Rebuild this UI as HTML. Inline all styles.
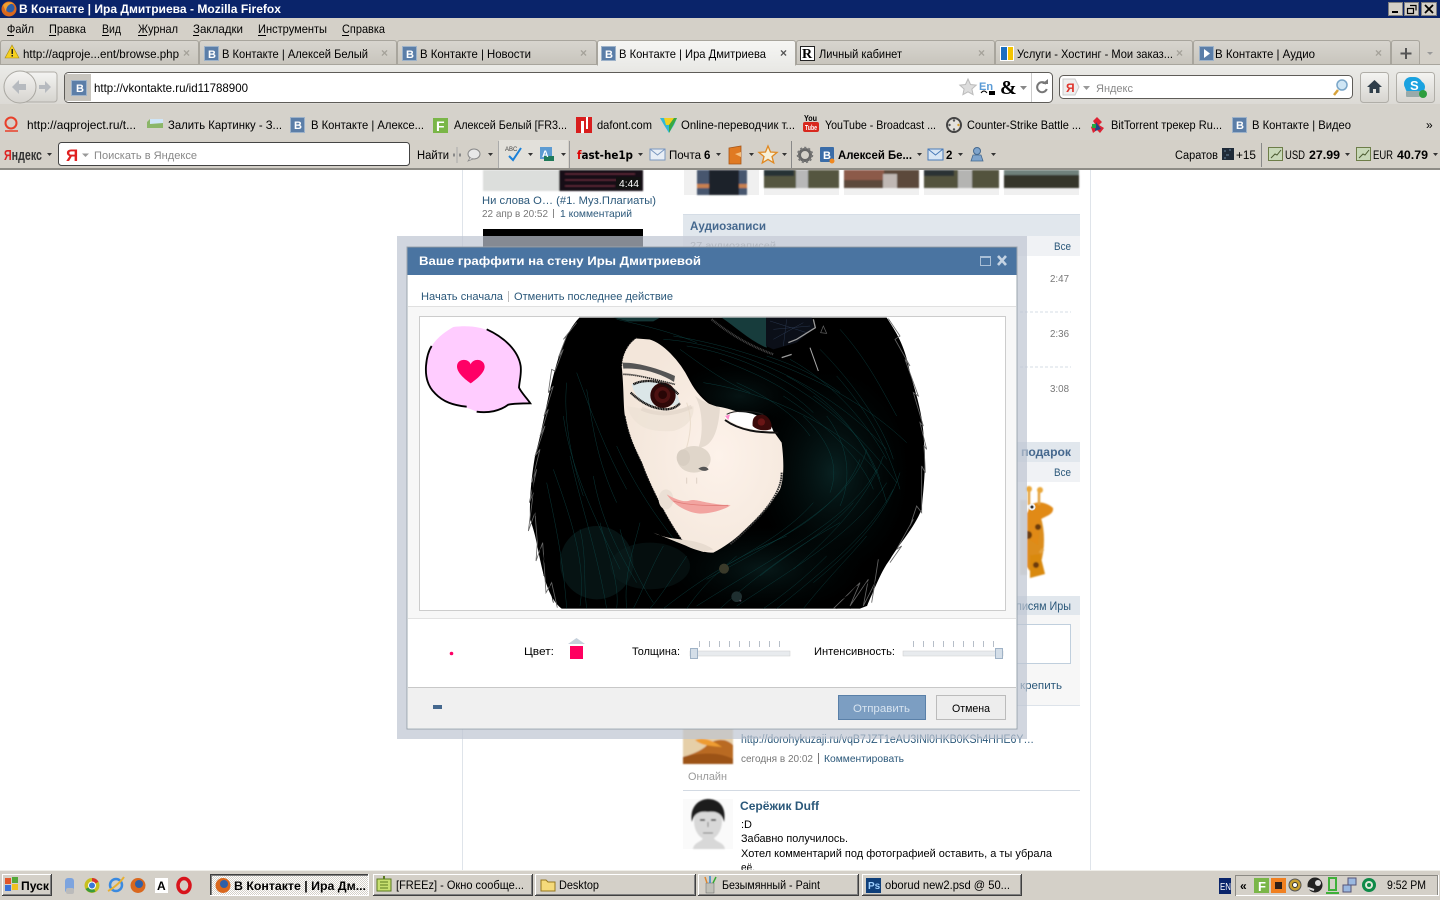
<!DOCTYPE html>
<html><head><meta charset="utf-8"><title>В Контакте | Ира Дмитриева - Mozilla Firefox</title>
<style>
html,body{margin:0;padding:0;background:#fff;width:1440px;height:900px;overflow:hidden}
svg{display:block}
text{font-family:"Liberation Sans","DejaVu Sans",sans-serif;font-size:12px;fill:#000;white-space:pre}
.b{font-weight:bold}
.v{font-size:11px;fill:#2b587a}
.g{font-size:10.5px;fill:#777}
.k{font-size:11px;fill:#000}
.w{fill:#fff}
.vk{font-weight:bold;font-size:11px;fill:#fff}
</style></head><body>
<svg width="1440" height="900" viewBox="0 0 1440 900" xmlns="http://www.w3.org/2000/svg">
<defs>
<linearGradient id="tabg" x1="0" y1="0" x2="0" y2="1"><stop offset="0" stop-color="#d8d5cf"/><stop offset="1" stop-color="#c8c5bd"/></linearGradient>
<linearGradient id="tabA" x1="0" y1="0" x2="0" y2="1"><stop offset="0" stop-color="#f6f6f4"/><stop offset="1" stop-color="#ebebe8"/></linearGradient>
<linearGradient id="nav" x1="0" y1="0" x2="0" y2="1"><stop offset="0" stop-color="#ebebe8"/><stop offset="1" stop-color="#dcdad5"/></linearGradient>
<linearGradient id="btn" x1="0" y1="0" x2="0" y2="1"><stop offset="0" stop-color="#f4f4f2"/><stop offset="1" stop-color="#d6d4cf"/></linearGradient>
<radialGradient id="tealR" cx=".5" cy=".5" r=".5"><stop offset="0" stop-color="#0c2c2c" stop-opacity=".75"/><stop offset="1" stop-color="#001010" stop-opacity="0"/></radialGradient>
<radialGradient id="faceG" cx=".6" cy=".55" r=".6"><stop offset="0" stop-color="#fdf2ea"/><stop offset="1" stop-color="#f3e6da"/></radialGradient>
<pattern id="chk" width="2" height="2" patternUnits="userSpaceOnUse"><rect width="2" height="2" fill="#fff"/><rect width="1" height="1" fill="#d4d0c8"/><rect x="1" y="1" width="1" height="1" fill="#d4d0c8"/></pattern>
<filter id="bl"><feGaussianBlur stdDeviation=".7"/></filter>
</defs>

<!-- page background -->
<rect x="0" y="170" width="1440" height="700" fill="#fff"/>
<rect x="462" y="170" width="1" height="700" fill="#dfe4ea"/>
<rect x="1090" y="170" width="1" height="700" fill="#dfe4ea"/>

<!-- left column -->
<g filter="url(#bl)"><rect x="483" y="170" width="76" height="21" fill="#dcdedc"/>
<rect x="559" y="170" width="84" height="21" fill="#161018"/>
<path d="M565 174h70M565 180h70M565 186h50" stroke="#6a2e40"/></g>
<rect x="616" y="177" width="25" height="12" fill="#111"/>
<text x="619" y="187" class="w" style="font-size:10px" textLength="20">4:44</text>
<text x="482" y="204" class="v" textLength="174">Ни слова О… (#1. Муз.Плагиаты)</text>
<text x="482" y="217" class="g" textLength="66">22 апр в 20:52</text>
<rect x="553" y="209" width="1" height="9" fill="#888"/>
<text x="560" y="217" class="v" style="font-size:10.5px" textLength="72">1 комментарий</text>
<rect x="483" y="229" width="160" height="60" fill="#000"/>

<!-- photo row -->
<rect x="684" y="170" width="75" height="25" fill="#f0f0f0"/>
<g filter="url(#bl)">
<rect x="697" y="170" width="50" height="25" fill="#46566e"/>
<rect x="697" y="184" width="50" height="4" fill="#c88050"/>
<rect x="709" y="170" width="30" height="25" fill="#1d232b"/>
</g>
<rect x="764" y="170" width="75" height="25" fill="#f0f0f0"/><g filter="url(#bl)"><rect x="764" y="170" width="75" height="18" fill="#55573f"/><rect x="796" y="170" width="12" height="18" fill="#b8b8b8"/><rect x="764" y="170" width="30" height="6" fill="#283236"/></g>
<rect x="844" y="170" width="75" height="25" fill="#f0f0f0"/><g filter="url(#bl)"><rect x="844" y="170" width="75" height="18" fill="#5b4a3a"/><rect x="844" y="170" width="40" height="10" fill="#8c5a48"/><rect x="883" y="174" width="14" height="14" fill="#c0b8b4"/></g>
<rect x="924" y="170" width="75" height="25" fill="#f0f0f0"/><g filter="url(#bl)"><rect x="924" y="170" width="75" height="18" fill="#52533c"/><rect x="958" y="170" width="14" height="18" fill="#b4b4b2"/><rect x="924" y="170" width="30" height="6" fill="#2a3034"/></g>
<rect x="1004" y="170" width="75" height="25" fill="#f0f0f0"/><g filter="url(#bl)"><rect x="1004" y="170" width="75" height="18" fill="#35342b"/><rect x="1004" y="170" width="75" height="5" fill="#70817c"/></g>

<!-- right column behind dialog -->
<rect x="683" y="215" width="397" height="21" fill="#e1e7ed"/><rect x="683" y="214" width="397" height="1" fill="#d5dde6"/>
<text x="690" y="230" class="b" style="font-size:11.5px;fill:#45688e" textLength="76">Аудиозаписи</text>
<rect x="683" y="236" width="397" height="20" fill="#f0f2f5"/>
<text x="690" y="249" class="g" style="fill:#999" textLength="86">27 аудиозаписей</text>
<text x="1054" y="250" class="v" textLength="17">Все</text>
<text x="1050" y="282" class="g" textLength="19">2:47</text>
<text x="1050" y="337" class="g" textLength="19">2:36</text>
<text x="1050" y="392" class="g" textLength="19">3:08</text>
<path d="M1020 312H1071M1020 367H1071" stroke="#d6dde6" stroke-dasharray="3 2"/>
<rect x="1000" y="442" width="80" height="20" fill="#e1e7ed"/>
<text x="1021" y="456" class="b" style="font-size:11.5px;fill:#45688e" textLength="50">подарок</text>
<rect x="1000" y="462" width="80" height="20" fill="#f0f2f5"/>
<text x="1054" y="476" class="v" textLength="17">Все</text>
<!-- giraffe -->
<g filter="url(#bl)">
<ellipse cx="1033" cy="540" rx="11" ry="32" fill="#dc8d1a"/>
<path d="M1028 512C1030 500 1044 500 1053 508C1054 515 1045 516 1040 520L1038 545L1030 540Z" fill="#e18a14"/>
<path d="M1029 505V490M1039 505V490" stroke="#e3a23c" stroke-width="2.5"/>
<circle cx="1029" cy="489" r="3" fill="#eaa83a"/><circle cx="1040" cy="490" r="3" fill="#eaa83a"/>
<path d="M1030 555L1040 554L1045 574L1030 578Z" fill="#d9890f"/>
<path d="M1040 553L1043 549" stroke="#e3a23c" stroke-width="3"/>
<circle cx="1036" cy="565" r="3" fill="#6a3a10"/><circle cx="1028" cy="535" r="4" fill="#6a3a10"/><circle cx="1038" cy="527" r="3" fill="#6a3a10"/>
<rect x="1020" y="500" width="7" height="75" fill="#e8e2d8"/>
</g>
<circle cx="1032" cy="507" r="3.5" fill="#eee"/><circle cx="1032" cy="507" r="1.5" fill="#333"/>
<rect x="1000" y="596" width="80" height="19" fill="#e1e7ed"/>
<text x="1016" y="610" class="v" textLength="55" style="font-size:11.5px">писям Иры</text>
<rect x="1000" y="615" width="80" height="90" fill="#f7f7f7"/>
<rect x="1000" y="624.5" width="70.5" height="39" fill="#fff" stroke="#c0cfdd"/>
<text x="1020" y="689" class="v" textLength="42">крепить</text>
<rect x="683" y="705" width="397" height="1" fill="#dde3ea"/>
<g filter="url(#bl)">
<rect x="683" y="725" width="50" height="39" fill="#b96a20"/>
<path d="M683 725h50v20c-8-8-20-6-28 2c-8 6-16 8-22 10z" fill="#e6cfa8"/>
<path d="M695 740C705 736 715 742 722 747C712 746 702 746 695 740Z" fill="#ee9c30"/>
<path d="M683 757c15-4 35-6 50 2v5h-50z" fill="#9c5218"/>
</g>
<text x="741" y="743" class="v" style="font-size:11.5px" textLength="293">http://dorohykuzaji.ru/vqB7JZT1eAU3INl0HKB0KSh4HHE6Y…</text>
<text x="741" y="762" class="g" textLength="72">сегодня в 20:02</text>
<rect x="818" y="753" width="1" height="11" fill="#777"/>
<text x="824" y="762" class="v" style="font-size:10.5px" textLength="80">Комментировать</text>
<text x="688" y="780" style="fill:#999;font-size:11px" textLength="39">Онлайн</text>
<rect x="683" y="790" width="397" height="1" fill="#d3dae3"/>
<!-- avatar -->
<rect x="683" y="799" width="50" height="50" fill="#fafafa"/>
<g filter="url(#bl)">
<path d="M693 849C694 842 702 842 703 838H714C715 842 724 842 725 849Z" fill="#d8d8d8"/>
<ellipse cx="708" cy="821" rx="14" ry="19" fill="#d8d8d8"/>
<path d="M692 822C689 806 700 799 708 799C718 799 727 806 724 822C722 813 716 811 708 812C700 811 694 813 692 822Z" fill="#1c1c1c"/>
<path d="M700 820h5M711 820h5" stroke="#333" stroke-width="1.6"/><path d="M708 822v5M703 833h10" stroke="#777"/>
</g>
<text x="740" y="810" class="b" style="font-size:11.5px;fill:#2b587a" textLength="79">Серёжик Duff</text>
<text x="741" y="828" class="k" textLength="11">:D</text>
<text x="741" y="842" class="k" textLength="107">Забавно получилось.</text>
<text x="741" y="857" class="k" textLength="311">Хотел комментарий под фотографией оставить, а ты убрала</text>
<text x="741" y="871" class="k" textLength="14">её.</text>

<!-- overlay -->
<rect x="397" y="236" width="630" height="503" fill="rgb(189,197,210)" fill-opacity=".7"/>

<!-- dialog -->
<rect x="407" y="247" width="610" height="482" fill="#fff"/>
<rect x="407" y="247" width="610" height="28" fill="#4a74a1"/><rect x="407" y="247" width="610" height="1" fill="#3f6690"/>
<text x="419" y="265" class="w b" style="font-size:12px" textLength="282">Ваше граффити на стену Иры Дмитриевой</text>
<rect x="980.5" y="256.5" width="10" height="9" fill="none" stroke="#a9bfd6"/><rect x="980" y="256" width="11" height="2" fill="#a9bfd6"/>
<path d="M998 256L1006 265M1006 256L998 265" stroke="#c4d3e3" stroke-width="2.6"/>
<text x="421" y="300" class="v" textLength="82">Начать сначала</text>
<rect x="508" y="291" width="1" height="11" fill="#bbb"/>
<text x="514" y="300" class="v" textLength="159">Отменить последнее действие</text>
<rect x="408" y="306" width="608" height="1" fill="#e0e0e0"/>
<rect x="408" y="307" width="608" height="311" fill="#f7f7f7"/>
<rect x="408" y="618" width="608" height="1" fill="#e2e2e2"/>
<rect x="419.5" y="316.5" width="586" height="294" fill="#fff" stroke="#ccc"/>

<!-- drawing: coordinates in 3x crop space -->
<svg x="420" y="317" width="585" height="292" viewBox="0 3 1755 876">
<!-- bubble -->
<path d="M100 33C140 28 190 30 225 55C265 75 295 110 302 150C305 175 298 195 297 215C305 232 320 245 331 262C310 262 285 262 265 266C240 285 205 292 170 287C130 268 100 270 70 255C40 235 20 205 18 170C16 135 25 105 35 90C55 60 80 45 100 33Z" fill="#ffccff"/>
<path d="M200 40C255 65 295 105 302 150C305 175 298 195 297 215C305 232 320 245 331 262C310 262 285 262 265 266C240 285 205 292 170 287M140 272C100 268 70 258 45 232C22 210 16 180 18 150C20 125 25 105 35 90" fill="none" stroke="#000" stroke-width="5.500"/>
<path d="M152 202C135 190 110 170 111 150C112 128 145 125 152 145C160 125 193 128 194 152C194 170 170 190 152 202Z" fill="#ff0066"/>
<!-- hair -->
<path d="M478 5L1400 5C1430 50 1455 90 1470 170C1490 240 1510 300 1512 380C1520 440 1510 520 1505 580C1480 640 1440 680 1410 730C1380 770 1360 830 1340 870L1320 878L425 878C390 850 375 800 360 730C350 680 345 650 330 610C328 540 335 480 345 420C365 350 380 260 395 200C415 120 435 50 478 5Z" fill="#000"/>
<!-- scribbled edges -->
<g fill="none" stroke="#666" stroke-width="2.500">
<path d="M470 20L430 70L440 60L415 125L430 100L405 165L395 160L385 230L400 210L372 300L385 280L360 360L375 330L345 420L360 400L335 500L350 460L328 560L340 530L325 645L345 590L352 680L348 735L368 680L378 830L395 800L412 875"/>
<path d="M1405 8L1440 60L1425 70L1470 150L1455 130L1495 240L1480 230L1510 330L1500 320L1520 400L1512 390L1516 470L1505 450L1505 590L1490 570L1470 630L1480 610L1430 700L1445 690L1410 740"/>
<path d="M1375 730L1355 860L1365 800L1330 870L1345 790L1290 870L1320 800L1240 878"/>
</g>
<g fill="none" stroke="#000" stroke-width="2">
<path d="M1380 760L1340 870M1365 760L1315 850M1340 800L1290 878M1310 810L1250 878M1300 830L1220 875"/>
<path d="M365 700L400 860M352 640L372 780M335 500L345 600M345 430L338 520"/>
</g>
<ellipse cx="1240" cy="470" rx="230" ry="310" fill="url(#tealR)"/>
<ellipse cx="960" cy="240" rx="200" ry="100" fill="url(#tealR)" opacity=".6"/>
<ellipse cx="1030" cy="760" rx="300" ry="130" fill="url(#tealR)" opacity=".75"/>
<ellipse cx="530" cy="740" rx="110" ry="110" fill="#0b2222" opacity=".55"/>
<ellipse cx="690" cy="750" rx="120" ry="70" fill="#0b2020" opacity=".45"/>
<!-- strands -->
<g fill="none" stroke="#0c4444" stroke-width="1.300" opacity=".95">
<path d="M730 70C900 80 1200 180 1400 400"/><path d="M800 90C1000 120 1250 250 1430 500"/><path d="M760 60C950 90 1250 180 1460 380"/>
<path d="M850 200C1050 230 1280 340 1370 470"/><path d="M1100 180C1250 260 1350 380 1400 560"/><path d="M1200 100C1300 200 1390 330 1420 430"/>
<path d="M1370 460C1300 600 1100 700 830 870"/><path d="M1400 500C1310 640 1180 720 950 870"/><path d="M1340 400C1300 560 1060 680 860 790"/>
<path d="M1420 520C1350 650 1240 740 1070 878"/><path d="M1260 620C1150 680 1030 760 900 878"/><path d="M1100 660C1000 700 880 760 730 878"/>
<path d="M1220 300C1280 380 1300 480 1260 570"/><path d="M1150 300C1230 380 1260 450 1230 530"/><path d="M1090 240C1200 310 1320 420 1360 520"/>
<path d="M470 170C510 280 560 410 620 520"/><path d="M430 300C450 450 520 600 600 760"/><path d="M400 460C450 600 500 740 480 870"/><path d="M590 390C630 480 690 580 770 680"/>
<path d="M540 620C560 700 600 800 590 878"/><path d="M660 620C640 700 610 780 620 878"/><path d="M480 640C500 720 490 800 500 878"/><path d="M730 690C690 760 670 820 640 878"/>
<path d="M590 10C680 30 760 50 830 80"/><path d="M1040 120C1100 140 1180 170 1260 230"/><path d="M1260 40C1340 130 1380 210 1430 300"/>
<path d="M1320 430C1280 540 1150 640 1010 700"/><path d="M1390 420C1340 560 1210 680 1120 760"/><path d="M1300 560C1220 650 1120 700 1020 780"/>
<path d="M1180 560C1110 640 1020 690 900 760"/><path d="M1440 470C1400 600 1300 700 1180 800"/><path d="M1340 660C1290 720 1220 790 1150 878"/>
<path d="M1250 180C1330 270 1400 380 1440 520"/><path d="M1180 240C1270 300 1350 400 1380 490"/><path d="M1110 130C1220 190 1330 300 1400 430"/>
<path d="M900 130C1000 170 1100 210 1180 290"/><path d="M950 200C1040 240 1130 300 1170 360"/><path d="M780 100C850 150 900 190 990 230"/>
<path d="M380 500C410 640 430 740 440 878"/><path d="M450 420C480 560 530 700 560 878"/><path d="M520 480C540 600 590 700 650 800"/>
<path d="M500 220C520 340 530 430 590 560"/><path d="M440 200C430 300 450 420 490 540"/><path d="M600 640C620 720 660 800 700 860"/>
<path d="M800 720C760 780 730 830 690 878"/><path d="M950 720C880 780 840 820 800 878"/><path d="M1220 720C1160 780 1100 830 1030 878"/>
</g>
<!-- hat -->
<path d="M580 5H720L700 16H625Z" fill="#143636"/>
<path d="M905 5L1040 5L1040 95C990 75 950 35 905 5Z" fill="#173c3c"/>
<path d="M1038 5L1175 5L1182 35L1130 80L1060 100L1038 90Z" fill="#0b0f18"/>
<path d="M1050 15L1160 50M1060 70L1150 20M1100 10L1090 90M1060 40L1170 30" stroke="#28354c" stroke-width="1.5" fill="none"/>
<path d="M1180 10L1186 35L1130 70L1105 80M1115 115L1085 125" stroke="#999" stroke-width="4" fill="none"/>
<path d="M1170 95L1195 165" stroke="#aaa" stroke-width="3"/>
<path d="M875 10C930 55 990 90 1060 115" stroke="#444" stroke-width="7" stroke-dasharray="3 2" fill="none"/>
<path d="M1202 50L1210 30L1220 52Z" fill="none" stroke="#666" stroke-width="2"/>
<!-- face -->
<path d="M650 65C625 80 605 115 605 150C612 220 610 275 615 300C625 355 640 390 665 440C690 510 750 630 800 690C830 705 860 710 880 710C910 695 945 670 965 650C1010 610 1050 570 1080 520C1095 480 1090 420 1085 380L1060 345C1000 300 930 275 880 270C850 250 825 220 810 190C780 130 730 80 690 68Z" fill="url(#faceG)"/>
<path d="M650 65C625 80 605 115 605 150M615 300C625 355 640 390 665 440C690 510 750 630 800 690" fill="none" stroke="#111" stroke-width="3" stroke-dasharray="6 2"/>
<path d="M650 65L690 68C730 80 780 130 810 190C825 220 850 250 880 270" fill="none" stroke="#000" stroke-width="5"/>
<path d="M620 270C640 330 680 350 760 345C800 335 825 305 820 270C790 280 720 290 620 270Z" fill="#eee2d6" opacity=".8"/>
<path d="M825 240C850 280 850 360 835 395C875 395 895 350 900 275C870 265 845 255 825 240Z" fill="#e6dbd0"/>
<path d="M800 260C815 300 815 340 800 395" stroke="#eadccc" stroke-width="3" fill="none"/>
<ellipse cx="822" cy="430" rx="50" ry="40" fill="#e0d6ca"/><ellipse cx="790" cy="425" rx="20" ry="25" fill="#d8cec2"/>
<path d="M835 458C845 450 860 450 866 460C855 468 845 465 835 458Z" fill="#555"/>
<path d="M800 485v18M830 485v18" stroke="#ddd0c4" stroke-width="3"/>
<ellipse cx="738" cy="550" rx="22" ry="30" fill="#ebe0d5"/>
<path d="M700 650C760 680 820 660 880 700L850 708L800 690Z" fill="#e8dcd0"/>
<!-- lips -->
<path d="M740 535C770 552 795 560 810 553C830 548 860 565 932 568C905 585 870 592 840 593C800 590 760 565 740 535Z" fill="#f2a4a0"/>
<path d="M760 555C800 568 860 570 925 568" stroke="#e07c78" stroke-width="2.500" fill="none"/>
<!-- brow -->
<path d="M608 140C660 140 720 160 765 180L762 198C720 170 660 155 610 158Z" fill="#555"/>
<path d="M610 175C650 175 700 190 765 205" stroke="#222" stroke-width="5" stroke-dasharray="4 2" fill="none"/>
<!-- left eye -->
<path d="M635 205C670 190 730 195 770 230L780 262C750 275 700 275 670 260C650 245 640 225 635 205Z" fill="#dbe6e8"/>
<circle cx="729" cy="238" r="38" fill="#2e0808"/><circle cx="727" cy="237" r="24" fill="#4e1212"/><circle cx="728" cy="236" r="13" fill="#280606"/>
<path d="M640 205C680 185 740 195 775 235M632 230C660 255 690 278 740 280C760 278 770 272 780 262" stroke="#111" stroke-width="7" stroke-dasharray="4 1" fill="none"/>
<path d="M665 278C710 298 760 298 815 272" stroke="#dfd3c8" stroke-width="12" fill="none" opacity=".6"/>
<!-- right eye -->
<path d="M915 300C950 280 1000 285 1050 320L1060 345C1020 345 960 340 915 305Z" fill="#fff"/>
<path d="M915 300L930 295L925 312Z" fill="#ff8ccc"/>
<path d="M998 330C995 300 1010 296 1030 296C1050 302 1060 330 1052 340C1030 346 1010 342 998 330Z" fill="#3c0a0a"/><circle cx="1024" cy="318" r="11" fill="#6a1515"/>
<path d="M915 312C960 345 1020 350 1075 350" stroke="#111" stroke-width="6" fill="none"/>
<path d="M920 295C950 280 1000 285 1030 295" stroke="#222" stroke-width="3" fill="none"/>
<!-- jaw right lines -->
<path d="M1085 470C1085 520 1050 570 1000 620C970 650 950 670 930 685" stroke="#333" stroke-width="6" stroke-dasharray="5 2" fill="none"/>
<!-- buttons -->
<circle cx="912" cy="758" r="15" fill="#3a3a2a"/><circle cx="950" cy="842" r="16" fill="#1f2f30"/><circle cx="961" cy="854" r="3" fill="#556"/>
</svg>

<!-- controls -->
<circle cx="451.5" cy="653.5" r="1.8" fill="#ff0066"/>
<text x="524" y="655" class="k" textLength="30">Цвет:</text>
<path d="M568 644L576.5 638L585 644Z" fill="#c5d0db"/>
<rect x="570" y="646" width="13" height="13" fill="#ff0060"/>
<text x="632" y="655" class="k" textLength="48">Толщина:</text>
<rect x="690" y="651" width="100" height="5" fill="#e8ebee" stroke="#ccc" stroke-width=".5"/>
<path d="M699.500 641v6M709.500 641v6M719.500 641v6M729.500 641v6M739.500 641v6M749.500 641v6M759.500 641v6M769.500 641v6M779.500 641v6" stroke="#b6bec8"/>
<rect x="690.500" y="648.500" width="7" height="10" fill="#d4dee8" stroke="#9fb2c6"/>
<text x="814" y="655" class="k" textLength="81">Интенсивность:</text>
<rect x="903" y="651" width="100" height="5" fill="#e8ebee" stroke="#ccc" stroke-width=".5"/>
<path d="M913.500 641v6M923.500 641v6M933.500 641v6M943.500 641v6M953.500 641v6M963.500 641v6M973.500 641v6M983.500 641v6M993.500 641v6" stroke="#b6bec8"/>
<rect x="995.500" y="648.500" width="7" height="10" fill="#d4dee8" stroke="#9fb2c6"/>
<rect x="408" y="687" width="608" height="1" fill="#c8c8c8"/>
<rect x="408" y="688" width="608" height="40" fill="#f0f0f0"/>
<rect x="433" y="705" width="9" height="4" fill="#45688e"/>
<rect x="838.500" y="695.500" width="87" height="24" fill="#7c9ec2" stroke="#5a80a8"/>
<text x="853" y="712" style="font-size:11px;fill:#d7e3ef" textLength="57">Отправить</text>
<rect x="936.500" y="695.500" width="69" height="24" fill="#ededed" stroke="#bbb"/>
<text x="952" y="712" class="k" textLength="38">Отмена</text>
<rect x="407" y="247" width="610" height="482" fill="none" stroke="#9aa4ae"/>

<!-- ==== chrome ==== -->
<rect x="0" y="0" width="1440" height="18" fill="#0a246a"/>
<circle cx="9" cy="9" r="7.500" fill="#d9681e"/><circle cx="10" cy="8" r="4.500" fill="#2d5fa8"/><path d="M3 5C7 1 12 2 14 4C10 3 6 6 6 12Z" fill="#f0a030"/>
<text x="19" y="13" class="w b" style="font-size:12px" textLength="262">В Контакте | Ира Дмитриева - Mozilla Firefox</text>
<g fill="#d4d0c8" stroke="#808080"><rect x="1388.500" y="2.500" width="14" height="13"/><rect x="1404.500" y="2.500" width="14" height="13"/><rect x="1421.500" y="2.500" width="15" height="13"/></g>
<rect x="1392" y="11" width="6" height="2" fill="#000"/>
<path d="M1410 5.500h6v5M1407.500 8.500h6v5h-6z" fill="none" stroke="#000" stroke-width="1.200"/>
<path d="M1425 5L1433 13M1433 5L1425 13" stroke="#000" stroke-width="1.800"/>

<rect x="0" y="18" width="1440" height="152" fill="#d4d0c8"/>
<text x="7" y="33" textLength="27">Файл</text><rect x="7" y="35" width="7" height="1"/>
<text x="49" y="33" textLength="37">Правка</text><rect x="49" y="35" width="7" height="1"/>
<text x="102" y="33" textLength="19">Вид</text><rect x="102" y="35" width="7" height="1"/>
<text x="138" y="33" textLength="40">Журнал</text><rect x="138" y="35" width="9" height="1"/>
<text x="193" y="33" textLength="50">Закладки</text><rect x="193" y="35" width="6" height="1"/>
<text x="258" y="33" textLength="69">Инструменты</text><rect x="258" y="35" width="8" height="1"/>
<text x="342" y="33" textLength="43">Справка</text><rect x="342" y="35" width="7" height="1"/>

<!-- tabs -->
<g stroke="#a8a59d" fill="url(#tabg)">
<path d="M.5 64V43Q.5 40.500 3 40.500H196Q198.500 40.500 198.500 43V64"/>
<path d="M199.500 64V43Q199.500 40.500 202 40.500H394Q396.500 40.500 396.500 43V64"/>
<path d="M397.500 64V43Q397.500 40.500 400 40.500H594Q596.500 40.500 596.500 43V64"/>
<path d="M796.500 64V43Q796.500 40.500 799 40.500H992Q994.500 40.500 994.500 43V64"/>
<path d="M995.500 64V43Q995.500 40.500 998 40.500H1190Q1192.500 40.500 1192.500 43V64"/>
<path d="M1193.500 64V43Q1193.500 40.500 1196 40.500H1388Q1390.500 40.500 1390.500 43V64"/>
<path d="M1391.500 64V43Q1391.500 40.500 1394 40.500H1417Q1419.500 40.500 1419.500 43V64"/>
</g>
<rect x="0" y="64" width="1440" height="40" fill="url(#nav)"/>
<rect x="0" y="64" width="1440" height="1" fill="#a8a59d"/>
<path d="M597.500 65V43Q597.500 40.500 600 40.500H793Q795.500 40.500 795.500 43V65Z" fill="url(#tabA)" stroke="#a8a59d"/>
<rect x="598" y="63" width="197" height="3" fill="#ebebe8"/>

<path d="M12 45L19 58H5Z" fill="#f5d020" stroke="#a88a10" stroke-width=".6"/><rect x="11.500" y="49" width="1.500" height="5" fill="#222"/><rect x="11.500" y="55" width="1.500" height="1.500" fill="#222"/>
<text x="23" y="58" textLength="156">http://aqproje...ent/browse.php</text>
<text x="183" y="57" style="font-size:12px;fill:#a5a29a" class="b">×</text>

<g fill="#5b7ea8" stroke="#9db2c9"><rect x="204.500" y="46.500" width="14" height="14"/><rect x="402.500" y="46.500" width="14" height="14"/><rect x="601.500" y="46.500" width="14" height="14"/><rect x="1199.500" y="46.500" width="14" height="14"/></g>
<text x="208" y="58" class="vk">В</text><text x="406" y="58" class="vk">В</text><text x="605" y="58" class="vk">В</text>
<path d="M1204 49L1210 53.500L1204 58Z" fill="#fff"/>
<text x="222" y="58" textLength="146">В Контакте | Алексей Белый</text>
<text x="381" y="57" style="fill:#a5a29a" class="b">×</text>
<text x="420" y="58" textLength="111">В Контакте | Новости</text>
<text x="580" y="57" style="fill:#a5a29a" class="b">×</text>
<text x="619" y="58" textLength="147">В Контакте | Ира Дмитриева</text>
<text x="780" y="57" style="fill:#555" class="b">×</text>
<rect x="800.500" y="46.500" width="14" height="14" fill="#fff" stroke="#222"/><text x="802" y="58" style="font-family:'Liberation Serif',serif;font-size:14px;font-weight:bold">R</text>
<text x="819" y="58" textLength="83">Личный кабинет</text>
<text x="978" y="57" style="fill:#a5a29a" class="b">×</text>
<rect x="1000" y="46" width="14" height="15" fill="#fff"/><rect x="1001" y="47" width="6" height="13" fill="#1b6fc0"/><rect x="1008" y="47" width="5" height="13" fill="#f4c400"/>
<text x="1017" y="58" textLength="156">Услуги - Хостинг - Мои заказ...</text>
<text x="1176" y="57" style="fill:#a5a29a" class="b">×</text>
<text x="1215" y="58" textLength="100">В Контакте | Аудио</text>
<text x="1375" y="57" style="fill:#a5a29a" class="b">×</text>
<path d="M1406 48v11M1400.500 53.500h11" stroke="#555" stroke-width="2"/>
<path d="M1427 52h6l-3 3z" fill="#999"/>

<!-- nav -->
<rect x="20" y="72" width="37" height="30" rx="3" fill="url(#btn)" stroke="#b0aea8"/>
<circle cx="20" cy="87" r="16" fill="url(#btn)" stroke="#a9a7a1"/>
<path d="M12 87l7-7v4h7v6h-7v4z" fill="#b6babf"/>
<path d="M51 87l-6-6v4h-6v4h6v4z" fill="#b6babf"/>
<rect x="64.500" y="72.500" width="988" height="30" rx="4" fill="#fff" stroke="#5e5c58"/>
<path d="M66 74h25v27H66Q65 101 65 100V75Q65 74 66 74Z" fill="#c8c5be"/>
<rect x="71.500" y="80.500" width="15" height="15" fill="#5b7ea8" stroke="#9db2c9"/><text x="76" y="92" class="vk">В</text>
<text x="94" y="92" textLength="154">http://vkontakte.ru/id11788900</text>
<path d="M968 79l2.500 5.500 5.700.6-4.300 3.900 1.200 5.700-5.100-2.900-5.100 2.900 1.200-5.700-4.300-3.900 5.700-.6z" fill="#ddd" stroke="#bbb"/>
<text x="979" y="90" style="font-size:11px;fill:#5a9bd6;font-weight:bold">En</text><path d="M981 93q3-4 6 0" stroke="#000" fill="none"/><rect x="989" y="91" width="6" height="4" fill="#000"/>
<text x="1000" y="94" style="font-family:'Liberation Serif',serif;font-size:20px;font-weight:bold">&amp;</text>
<path d="M1020 86h7l-3.500 4z" fill="#888"/>
<rect x="1031" y="73" width="1" height="29" fill="#ccc"/>
<path d="M1046 84a5 5 0 1 0 .8 5" fill="none" stroke="#777" stroke-width="2"/><path d="M1042 84h6v-5z" fill="#777"/>
<rect x="1059.500" y="75.500" width="293" height="23" rx="4" fill="#fff" stroke="#5e5c58"/>
<path d="M1063 79h12l4 8-4 8h-12z" fill="#eee" stroke="#ccc"/><text x="1066" y="92" style="font-size:12px;fill:#e0352c;font-weight:bold">Я</text>
<path d="M1083 86h7l-3.500 4z" fill="#999"/>
<text x="1096" y="92" style="fill:#888;font-size:11px" textLength="37">Яндекс</text>
<circle cx="1342" cy="85" r="5" fill="#cfe6f5" stroke="#7aa6c8" stroke-width="1.500"/><path d="M1338 90l-4 5" stroke="#d6a23a" stroke-width="2.500"/>
<rect x="1360.500" y="72.500" width="28" height="30" rx="3" fill="url(#btn)" stroke="#b0aea8"/>
<path d="M1367 87l7.500-7 7.500 7h-2.500v6h-3.500v-4h-3v4h-3.500v-6z" fill="#2f3e4a"/>
<rect x="1396.500" y="72.500" width="38" height="30" rx="3" fill="url(#btn)" stroke="#b0aea8"/>
<circle cx="1411" cy="84" r="7" fill="#1aa2e0"/><circle cx="1419" cy="87" r="6" fill="#1aa2e0"/><circle cx="1414" cy="86" r="9" fill="#1aa2e0"/><text x="1410" y="90" class="w b" style="font-size:13px">S</text>
<rect x="1406" y="91" width="14" height="6" fill="#9aa" rx="1"/><circle cx="1423" cy="94" r="4" fill="#2e9e3e"/>

<!-- bookmarks -->
<rect x="0" y="104" width="1440" height="36" fill="#d5d2cb"/>
<circle cx="11" cy="123" r="5.500" fill="none" stroke="#e8402a" stroke-width="2"/><path d="M5 131h13" stroke="#e8402a" stroke-width="1.500"/>
<text x="27" y="129" textLength="109">http://aqproject.ru/t...</text>
<path d="M147 122l3-3h13v9h-16z" fill="#8bb668"/><path d="M150 119h13v4l-13 1z" fill="#cfe6f8"/>
<text x="168" y="129" textLength="114">Залить Картинку - З...</text>
<rect x="290.500" y="117.500" width="14" height="15" fill="#5b7ea8" stroke="#9db2c9"/><text x="294" y="129" class="vk">В</text>
<text x="311" y="129" textLength="113">В Контакте | Алексе...</text>
<rect x="433" y="118" width="15" height="15" fill="#7ab648"/><text x="436" y="131" class="w b" style="font-size:14px">F</text>
<text x="454" y="129" textLength="113">Алексей Белый [FR3...</text>
<rect x="576" y="117" width="16" height="16" fill="#d81e1e"/><rect x="581" y="121" width="3" height="12" fill="#fff"/><rect x="586" y="117" width="2" height="12" fill="#fff"/>
<text x="597" y="129" textLength="55">dafont.com</text>
<path d="M660 118h17l-3 7-5 8-5-8z" fill="#2fb8d8"/><path d="M664 118h10l-2 7h-6z" fill="#f0d020"/><path d="M669 125l5-7 3 0-8 15z" fill="#3aa840"/>
<text x="681" y="129" textLength="114">Online-переводчик т...</text>
<text x="804" y="121" class="b" style="font-size:8px" textLength="13">You</text>
<rect x="803" y="122" width="16" height="10" rx="2" fill="#d8281e"/><text x="805" y="130" class="w b" style="font-size:7.500px" textLength="12">Tube</text>
<text x="825" y="129" textLength="111">YouTube - Broadcast ...</text>
<circle cx="954" cy="125" r="7" fill="#e4e2dc" stroke="#444" stroke-width="2"/><circle cx="954" cy="120.500" r="1.200" fill="#555"/><circle cx="954" cy="129.500" r="1.200" fill="#555"/><circle cx="949.500" cy="125" r="1.200" fill="#555"/><circle cx="958.500" cy="125" r="1.200" fill="#d8a030"/>
<text x="967" y="129" textLength="114">Counter-Strike Battle ...</text>
<path d="M1097 117l5 5-3 3 5 3-4 5-3-3-4 3-2-6 4-3-2-3z" fill="#d23"/><path d="M1096 122l5 7-6 2z" fill="#248"/><rect x="1092" y="124" width="4" height="4" fill="#2a4"/>
<text x="1111" y="129" textLength="111">BitTorrent трекер Ru...</text>
<rect x="1232.500" y="117.500" width="14" height="15" fill="#5b7ea8" stroke="#9db2c9"/><text x="1236" y="129" class="vk">В</text>
<text x="1252" y="129" textLength="99">В Контакте | Видео</text>
<text x="1426" y="129" style="font-size:12px">»</text>

<!-- yandex bar -->
<rect x="0" y="168" width="1440" height="2" fill="#8e8c86"/>
<text x="4" y="160" class="b" style="font-size:15px;fill:#333" textLength="38"><tspan style="fill:#d22">Я</tspan>ндекс</text>
<path d="M47 153h5l-2.500 3z" fill="#333"/>
<rect x="58.500" y="142.500" width="351" height="23" rx="3" fill="#fff" stroke="#444"/>
<text x="66" y="161" class="b" style="font-size:17px;fill:#e02020">Я</text>
<path d="M82 153.500h7l-3.500 3.500z" fill="#999"/>
<text x="94" y="159" style="fill:#888;font-size:11px" textLength="103">Поискать в Яндексе</text>
<text x="417" y="159" style="font-size:11.500px" textLength="32">Найти</text>
<path d="M457 147v16" stroke="#aaa"/>
<path d="M455 155l-2 0M459 155l2 0" stroke="#888" stroke-width="3"/>
<ellipse cx="474" cy="154" rx="6" ry="5" fill="#e8e8e8" stroke="#888"/><path d="M470 158l-2 3 5-2" fill="#e8e8e8" stroke="#888" stroke-width=".7"/>
<path d="M488 153h5l-2.500 3z" fill="#333"/>
<rect x="498" y="141" width="1" height="27" fill="#aaa"/>
<rect x="499" y="140" width="69" height="28" fill="#e2e0da"/>
<text x="505" y="151" style="font-size:6px;fill:#444">ABC</text>
<path d="M509 156l4 4 8-12" fill="none" stroke="#1a80d8" stroke-width="2"/>
<path d="M528 153h5l-2.500 3z" fill="#333"/>
<rect x="540" y="147" width="12" height="12" fill="#5c9bd2"/><rect x="544" y="156" width="10" height="5" fill="#1f7a5a"/><text x="542" y="157" class="w b" style="font-size:9px">A</text>
<path d="M561 153h5l-2.500 3z" fill="#333"/>
<rect x="569" y="141" width="1" height="27" fill="#999"/>
<text x="577" y="159" class="b" style="font-size:11.500px;font-family:'DejaVu Sans',sans-serif" textLength="56"><tspan style="fill:#d00">f</tspan>ast-he1p</text>
<path d="M638 153h5l-2.500 3z" fill="#333"/>
<rect x="650" y="149" width="15" height="11" fill="#e8eef6" stroke="#7a97bf"/><path d="M650 149l7.500 6 7.500-6" fill="none" stroke="#7a97bf"/>
<text x="669" y="159" style="font-size:11.500px" textLength="32">Почта</text><text x="704" y="159" class="b" style="font-size:11.500px">6</text>
<path d="M716 153h5l-2.500 3z" fill="#333"/>
<path d="M729 148l12-2v18h-12z" fill="#e07a22" stroke="#a5561a" stroke-width=".8"/><path d="M735 154l6-2v5z" fill="#f6c080"/>
<path d="M749 153h5l-2.500 3z" fill="#333"/>
<path d="M768 146l2.500 6 6.500.4-5 4.200 1.700 6.300-5.700-3.500-5.700 3.500 1.700-6.300-5-4.200 6.500-.4z" fill="#f6f0d8" stroke="#e08820" stroke-width="1.300"/>
<path d="M782 153h5l-2.500 3z" fill="#333"/>
<rect x="791" y="141" width="1" height="27" fill="#888"/>
<circle cx="805" cy="155" r="5.500" fill="none" stroke="#666" stroke-width="3"/><circle cx="805" cy="155" r="7" fill="none" stroke="#777" stroke-width="2.500" stroke-dasharray="2 2"/>
<rect x="820" y="147" width="14" height="15" fill="#3a6ca8" rx="1"/><text x="823" y="159" class="vk">В</text><circle cx="832" cy="161" r="2.500" fill="#f08820"/>
<text x="838" y="159" class="b" style="font-size:11.500px" textLength="74">Алексей Бе...</text>
<path d="M917 153h5l-2.500 3z" fill="#333"/>
<rect x="928" y="149" width="15" height="11" fill="#d8e6f4" stroke="#4a7bb8"/><path d="M928 149l7.500 6 7.500-6" fill="none" stroke="#4a7bb8"/>
<text x="946" y="159" class="b" style="font-size:11.500px">2</text>
<path d="M958 153h5l-2.500 3z" fill="#333"/>
<circle cx="977" cy="151" r="3.500" fill="#7fa4cc" stroke="#44688f"/><path d="M971 161l2-6h8l2 6z" fill="#7fa4cc" stroke="#44688f" stroke-width=".8"/>
<path d="M991 153h5l-2.500 3z" fill="#333"/>
<text x="1175" y="159" style="font-size:11.500px" textLength="43">Саратов</text>
<rect x="1222" y="148" width="12" height="12" fill="#1e2a38"/><path d="M1224 151h2M1229 150h2M1226 155h3M1224 158h2" stroke="#68849c"/>
<text x="1236" y="159" style="font-size:11.500px" textLength="20">+15</text>
<rect x="1261" y="143" width="1" height="24" fill="#888"/>
<rect x="1268.500" y="147.500" width="14" height="13" fill="#c8d8b8" stroke="#6d7d48"/><path d="M1271 158l4-4 2 1 4-5" stroke="#4a5a30" fill="none"/>
<text x="1285" y="159" style="font-size:11.500px" textLength="20">USD</text><text x="1309" y="159" class="b" style="font-size:11.500px" textLength="31">27.99</text>
<path d="M1345 153h5l-2.500 3z" fill="#333"/>
<rect x="1356.500" y="147.500" width="14" height="13" fill="#c8d8b8" stroke="#6d7d48"/><path d="M1359 158l4-4 2 1 4-5" stroke="#4a5a30" fill="none"/>
<text x="1373" y="159" style="font-size:11.500px" textLength="20">EUR</text><text x="1397" y="159" class="b" style="font-size:11.500px" textLength="31">40.79</text>
<path d="M1433 153h5l-2.500 3z" fill="#333"/>

<!-- taskbar -->
<rect x="0" y="870" width="1440" height="30" fill="#d4d0c8"/><rect x="0" y="870" width="1440" height="1" fill="#efeee9"/>
<rect x="2" y="874" width="50" height="22" fill="#404040"/><rect x="2" y="874" width="49" height="21" fill="#fff"/><rect x="3" y="875" width="48" height="20" fill="#808080"/><rect x="3" y="875" width="47" height="19" fill="#d4d0c8"/>
<rect x="5" y="878" width="6" height="6" fill="#e2562a"/><rect x="12" y="877" width="6" height="6" fill="#54a83a"/><rect x="5" y="885" width="6" height="6" fill="#3a72d8"/><rect x="12" y="884" width="6" height="6" fill="#f0c020"/>
<text x="21" y="890" class="b" style="font-size:12px" textLength="28">Пуск</text>
<rect x="65" y="878" width="9" height="15" rx="3" fill="#7da4de"/><rect x="66" y="888" width="8" height="6" rx="2" fill="#bbb"/>
<circle cx="92" cy="885.500" r="7.500" fill="#c8c020"/><path d="M92 878a7.500 7.500 0 0 1 6.500 3.700L92 885.500z" fill="#d8352a"/><path d="M85.500 889a7.500 7.500 0 0 0 10 2.500L92 885.500z" fill="#3a9a3a"/><circle cx="92" cy="885.500" r="3.500" fill="#3a78d8" stroke="#fff"/>
<ellipse cx="116" cy="885" rx="6" ry="6" fill="none" stroke="#3a8ae0" stroke-width="2.500"/><path d="M108 891c4-2 12-8 16-14" stroke="#e8b030" stroke-width="2" fill="none"/>
<circle cx="138" cy="885.500" r="7.500" fill="#d9681e"/><circle cx="139" cy="884" r="4" fill="#2d5fa8"/>
<rect x="155" y="878" width="13" height="15" fill="#fff"/><text x="157" y="890" class="b" style="font-size:12px">A</text>
<ellipse cx="184" cy="885.500" rx="6" ry="7" fill="none" stroke="#d8141c" stroke-width="3.500"/>

<rect x="210" y="874" width="159" height="22" fill="#fff"/><rect x="210" y="874" width="158" height="21" fill="#404040"/><rect x="211" y="875" width="157" height="20" fill="#808080"/><rect x="212" y="876" width="156" height="19" fill="url(#chk)"/>
<circle cx="223" cy="885.500" r="7.500" fill="#d9681e"/><circle cx="224" cy="884" r="4" fill="#2d5fa8"/>
<text x="234" y="890" class="b" style="font-size:12px" textLength="132">В Контакте | Ира Дм...</text>

<g>
<rect x="373" y="874" width="160" height="22" fill="#404040"/><rect x="373" y="874" width="159" height="21" fill="#fff"/><rect x="374" y="875" width="158" height="20" fill="#808080"/><rect x="374" y="875" width="157" height="19" fill="#d4d0c8"/>
<rect x="377" y="879" width="14" height="12" fill="#c8e070" stroke="#5a7a20"/><path d="M380 882h8M380 885h8M380 888h8" stroke="#5a7a20"/><rect x="383" y="876" width="2" height="3" fill="#5a7a20"/>
<text x="396" y="889" textLength="128">[FREEz] - Окно сообще...</text>
</g>
<g>
<rect x="535" y="874" width="161" height="22" fill="#404040"/><rect x="535" y="874" width="160" height="21" fill="#fff"/><rect x="536" y="875" width="159" height="20" fill="#808080"/><rect x="536" y="875" width="158" height="19" fill="#d4d0c8"/>
<path d="M541 880h5l2 2h7v9h-14z" fill="#f5da7a" stroke="#96781f"/>
<text x="559" y="889" textLength="40">Desktop</text>
</g>
<g>
<rect x="698" y="874" width="161" height="22" fill="#404040"/><rect x="698" y="874" width="160" height="21" fill="#fff"/><rect x="699" y="875" width="159" height="20" fill="#808080"/><rect x="699" y="875" width="158" height="19" fill="#d4d0c8"/>
<rect x="706" y="883" width="8" height="10" fill="#c0c0b8" stroke="#666" stroke-width=".5"/><path d="M707 883l-2-6" stroke="#d83" stroke-width="1.500"/><path d="M710 883l0-7" stroke="#38c" stroke-width="1.500"/><path d="M713 883l3-6" stroke="#3a3" stroke-width="1.500"/>
<text x="722" y="889" textLength="98">Безымянный - Paint</text>
</g>
<g>
<rect x="862" y="874" width="160" height="22" fill="#404040"/><rect x="862" y="874" width="159" height="21" fill="#fff"/><rect x="863" y="875" width="158" height="20" fill="#808080"/><rect x="863" y="875" width="157" height="19" fill="#d4d0c8"/>
<rect x="866" y="878" width="15" height="15" fill="#0f3f7a"/><text x="868" y="889" style="font-size:10px;fill:#9fd0ff" class="b">Ps</text>
<text x="885" y="889" textLength="125">oborud new2.psd @ 50...</text>
</g>
<rect x="1219" y="878" width="12" height="16" fill="#0a246a"/><text x="1220" y="890" class="w" style="font-size:10px" textLength="11">EN</text>
<rect x="1235.500" y="875.500" width="202" height="20" fill="#d4d0c8" stroke="#8c8a84"/><rect x="1236" y="895" width="203" height="1" fill="#fff"/><rect x="1438" y="875" width="1" height="21" fill="#fff"/>
<text x="1240" y="890" class="b" style="font-size:12px">«</text>
<rect x="1254" y="878" width="15" height="15" fill="#7ab648"/><text x="1258" y="891" class="w b" style="font-size:13px">F</text>
<rect x="1271" y="878" width="15" height="15" fill="#f08020"/><rect x="1275" y="882" width="7" height="7" fill="#302018"/>
<circle cx="1295" cy="885" r="6" fill="#c8a030" stroke="#555"/><circle cx="1295" cy="885" r="2.500" fill="#fff" stroke="#333"/>
<circle cx="1315" cy="885" r="7.500" fill="#222"/><circle cx="1318" cy="883" r="3" fill="#ddd"/><path d="M1308 888l6 2" stroke="#ddd" stroke-width="2"/>
<rect x="1329" y="878" width="7" height="12" fill="none" stroke="#3fb03a" stroke-width="2"/><path d="M1326 893h13" stroke="#3fb03a" stroke-width="2"/>
<rect x="1348" y="878" width="8" height="7" fill="#9ab8e0" stroke="#557"/><rect x="1343" y="885" width="8" height="7" fill="#9ab8e0" stroke="#557"/>
<circle cx="1369" cy="885" r="7" fill="#0e8a48"/><circle cx="1369" cy="885" r="4" fill="#dfe8d8"/><circle cx="1369" cy="885" r="2" fill="#0e8a48"/>
<text x="1387" y="889" textLength="39">9:52 PM</text>
</svg>
<script>document.querySelectorAll('text[textLength]').forEach(function(t){t.setAttribute('lengthAdjust','spacingAndGlyphs')});</script>
</body></html>
